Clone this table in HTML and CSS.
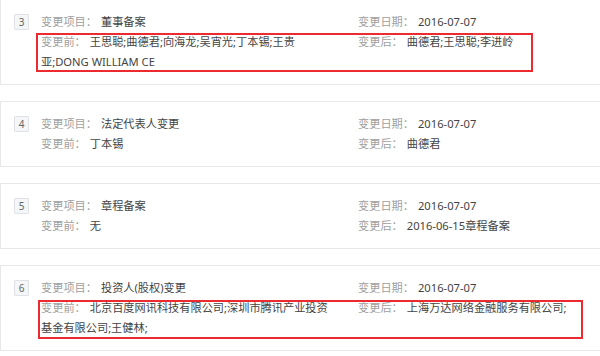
FILE: index.html
```html
<!DOCTYPE html>
<html lang="zh-CN">
<head>
<meta charset="utf-8">
<title>变更记录</title>
<link rel="stylesheet" href="styles.css">
</head>
<body>
<div class="list">
  <div class="card">
    <span class="num">3</span>
    <div class="grid">
      <div class="cell"><span class="lbl">变更项目：</span><span class="val">董事备案</span></div>
      <div class="cell"><span class="lbl">变更日期：</span><span class="val">2016-07-07</span></div>
      <div class="cell"><span class="lbl">变更前：</span><span class="val">王思聪;曲德君;向海龙;吴宵光;丁本锡;王贵亚;DONG WILLIAM CE</span></div>
      <div class="cell"><span class="lbl">变更后：</span><span class="val">曲德君;王思聪;李进岭</span></div>
    </div>
    <div class="mark mark-a"></div>
  </div>
  <div class="card">
    <span class="num">4</span>
    <div class="grid">
      <div class="cell"><span class="lbl">变更项目：</span><span class="val">法定代表人变更</span></div>
      <div class="cell"><span class="lbl">变更日期：</span><span class="val">2016-07-07</span></div>
      <div class="cell"><span class="lbl">变更前：</span><span class="val">丁本锡</span></div>
      <div class="cell"><span class="lbl">变更后：</span><span class="val">曲德君</span></div>
    </div>
  </div>
  <div class="card">
    <span class="num">5</span>
    <div class="grid">
      <div class="cell"><span class="lbl">变更项目：</span><span class="val">章程备案</span></div>
      <div class="cell"><span class="lbl">变更日期：</span><span class="val">2016-07-07</span></div>
      <div class="cell"><span class="lbl">变更前：</span><span class="val">无</span></div>
      <div class="cell"><span class="lbl">变更后：</span><span class="val">2016-06-15章程备案</span></div>
    </div>
  </div>
  <div class="card">
    <span class="num">6</span>
    <div class="grid">
      <div class="cell"><span class="lbl">变更项目：</span><span class="val">投资人(股权)变更</span></div>
      <div class="cell"><span class="lbl">变更日期：</span><span class="val">2016-07-07</span></div>
      <div class="cell"><span class="lbl">变更前：</span><span class="val">北京百度网讯科技有限公司;深圳市腾讯产业投资基金有限公司;王健林;</span></div>
      <div class="cell"><span class="lbl">变更后：</span><span class="val">上海万达网络金融服务有限公司;</span></div>
    </div>
    <div class="mark mark-b"></div>
  </div>
</div>
</body>
</html>
```

FILE: styles.css
```css
html, body {
  margin: 0;
  padding: 0;
  background: #ffffff;
  overflow: hidden;
}

body {
  font-family: "Noto Sans", "Noto Sans CJK SC", sans-serif;
  font-size: 11.2px;
  line-height: 20px;
  color: #444444;
}

.list {
  display: flex;
  flex-direction: column;
  gap: 16px;
  margin-top: -1px;
  width: 640px;
}

.card {
  position: relative;
  display: flex;
  align-items: flex-start;
  gap: 12px;
  padding: 12px 0 12px 13px;
  border: 1px solid #e8e8e8;
  background: #ffffff;
}

.num {
  flex: none;
  box-sizing: border-box;
  width: 15px;
  height: 16px;
  margin-top: 2px;
  border: 1px solid #dfe3e8;
  border-radius: 1px;
  background: #f4f6f8;
  color: #666666;
  font-family: "Noto Sans", sans-serif;
  font-size: 10px;
  line-height: 14px;
  text-align: center;
}

.grid {
  display: grid;
  grid-template-columns: 295px 1fr;
  column-gap: 22px;
}

.lbl {
  color: #a0a0a0;
  margin-right: 4px;
}

.val {
  color: #444444;
}

.mark {
  position: absolute;
  border: 2px solid #ec2a2f;
  box-sizing: border-box;
  height: 39px;
}

.mark-a {
  left: 35px;
  top: 33px;
  width: 497px;
}

.mark-b {
  left: 37px;
  top: 34px;
  width: 545px;
}
```
